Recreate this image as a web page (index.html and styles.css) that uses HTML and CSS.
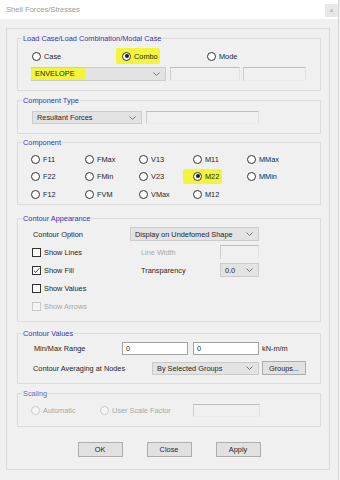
FILE: index.html
```html
<!DOCTYPE html>
<html lang="en">
<head>
  <meta charset="UTF-8">
  <title>Shell Forces/Stresses</title>
  <link rel="stylesheet" href="styles.css">
</head>
<body>

  <div class="window">
    <div class="titlebar">
      <span class="title">Shell Forces/Stresses</span>
      <span class="close">×</span>
    </div>

    <div class="panel">

      <!-- Load case -->
      <fieldset class="group">
        <legend>Load Case/Load Combination/Modal Case</legend>
        <div class="body load-body">
          <div class="case-row">
            <label class="opt"><span class="radio"></span>Case</label>
            <label class="opt"><span class="hl hl-combo"><span class="radio on"></span>Combo</span></label>
            <label class="opt"><span class="radio"></span>Mode</label>
          </div>
          <div class="field-row">
            <div class="combo combo-env">
              <span class="hl hl-env">ENVELOPE</span>
              <svg class="chev" width="7" height="4" viewBox="0 0 7 4"><polyline points="0.5,0.5 3.5,3.5 6.5,0.5" /></svg>
            </div>
            <div class="box box-a"></div>
            <div class="box box-b"></div>
          </div>
        </div>
      </fieldset>

      <!-- Component type -->
      <fieldset class="group g-type">
        <legend>Component Type</legend>
        <div class="body type-body">
          <div class="combo combo-type">
            <span>Resultant Forces</span>
            <svg class="chev" width="7" height="4" viewBox="0 0 7 4"><polyline points="0.5,0.5 3.5,3.5 6.5,0.5" /></svg>
          </div>
          <div class="box box-type"></div>
        </div>
      </fieldset>

      <!-- Component -->
      <fieldset class="group g-comp">
        <legend>Component</legend>
        <div class="body comp-body">
          <label class="opt"><span class="radio"></span>F11</label>
          <label class="opt"><span class="radio"></span>FMax</label>
          <label class="opt"><span class="radio"></span>V13</label>
          <label class="opt"><span class="radio"></span>M11</label>
          <label class="opt"><span class="radio"></span>MMax</label>
          <label class="opt"><span class="radio"></span>F22</label>
          <label class="opt"><span class="radio"></span>FMin</label>
          <label class="opt"><span class="radio"></span>V23</label>
          <label class="opt"><span class="hl hl-m22"><span class="radio on"></span>M22</span></label>
          <label class="opt"><span class="radio"></span>MMin</label>
          <label class="opt"><span class="radio"></span>F12</label>
          <label class="opt"><span class="radio"></span>FVM</label>
          <label class="opt"><span class="radio"></span>VMax</label>
          <label class="opt"><span class="radio"></span>M12</label>
        </div>
      </fieldset>

      <!-- Contour appearance -->
      <fieldset class="group g-appear">
        <legend>Contour Appearance</legend>
        <div class="body appear-body">
          <div class="row">
            <span class="lbl lbl-option">Contour Option</span>
            <div class="combo combo-option">
              <span>Display on Undefomed Shape</span>
              <svg class="chev" width="7" height="4" viewBox="0 0 7 4"><polyline points="0.5,0.5 3.5,3.5 6.5,0.5" /></svg>
            </div>
          </div>
          <div class="row">
            <label class="opt opt-check"><span class="check"></span>Show Lines</label>
            <span class="lbl lbl-side dis">Line Width</span>
            <div class="box box-small"></div>
          </div>
          <div class="row">
            <label class="opt opt-check">
              <span class="check">
                <svg width="7" height="7" viewBox="0 0 7 7"><polyline points="0.8,3.6 2.7,5.4 6.2,1.4" /></svg>
              </span>Show Fill
            </label>
            <span class="lbl lbl-side">Transparency</span>
            <div class="combo combo-small">
              <span>0.0</span>
              <svg class="chev" width="7" height="4" viewBox="0 0 7 4"><polyline points="0.5,0.5 3.5,3.5 6.5,0.5" /></svg>
            </div>
          </div>
          <div class="row">
            <label class="opt"><span class="check"></span>Show Values</label>
          </div>
          <div class="row">
            <label class="opt dis"><span class="check"></span>Show Arrows</label>
          </div>
        </div>
      </fieldset>

      <!-- Contour values -->
      <fieldset class="group g-values">
        <legend>Contour Values</legend>
        <div class="body values-body">
          <div class="row row-range">
            <span class="lbl lbl-range">Min/Max Range</span>
            <div class="input">0</div>
            <div class="input">0</div>
            <span class="unit">kN-m/m</span>
          </div>
          <div class="row row-avg">
            <span class="lbl lbl-avg">Contour Averaging at Nodes</span>
            <div class="combo combo-avg">
              <span>By Selected Groups</span>
              <svg class="chev" width="7" height="4" viewBox="0 0 7 4"><polyline points="0.5,0.5 3.5,3.5 6.5,0.5" /></svg>
            </div>
            <button class="btn btn-groups">Groups...</button>
          </div>
        </div>
      </fieldset>

      <!-- Scaling -->
      <fieldset class="group g-scale dis-group">
        <legend>Scaling</legend>
        <div class="body scale-body">
          <label class="opt dis opt-auto"><span class="radio"></span>Automatic</label>
          <label class="opt dis opt-user"><span class="radio"></span>User Scale Factor</label>
          <div class="box box-scale"></div>
        </div>
      </fieldset>

      <div class="actions">
        <button class="btn btn-main">OK</button>
        <button class="btn btn-main">Close</button>
        <button class="btn btn-main">Apply</button>
      </div>

    </div>
  </div>

</body>
</html>
```

FILE: styles.css
```css
* {
  box-sizing: border-box;
}

body {
  margin: 0;
  background: #f0f0f0;
  font-family: "Liberation Sans", Arial, sans-serif;
  font-size: 7.35px;
  line-height: 9px;
  color: #1e1e1e;
}

.window {
  width: 339px;
  height: 480px;
  border-right: 1px solid #d6d6d6;
  background: #f0f0f0;
}

.titlebar {
  height: 19px;
  background: #fff;
  display: flex;
  align-items: center;
  justify-content: space-between;
  padding: 0 0 0 6px;
}

.title {
  font-size: 7.6px;
  color: #9a9a9a;
}

.close {
  width: 13px;
  height: 13px;
  margin-top: 2px;
  background: #e8e8e8;
  color: #a6a6a6;
  font-size: 8px;
  line-height: 13px;
  text-align: center;
}

.panel {
  margin: 9px 0 0 6px;
  width: 324px;
  border: 1px solid #dcdcdc;
  padding: 5px 8px 12px 10px;
}

/* group boxes */
.group {
  margin: 0;
  padding: 0;
  min-width: 0;
  border: 1px solid #dcdcdc;
}

.group legend {
  margin-left: 4px;
  padding: 0 1px;
  line-height: 9px;
  color: #3535a8;
}

.dis-group legend {
  color: #6a6aba;
}

.g-type { margin-top: 5px; }
.g-comp { margin-top: 4px; }
.g-appear { margin-top: 9px; }
.g-values { margin-top: 7px; }
.g-scale { margin-top: 5px; }

/* options */
.opt {
  display: flex;
  align-items: center;
  gap: 3px;
  height: 12px;
  white-space: nowrap;
}

.radio {
  width: 9px;
  height: 9px;
  border: 1px solid #333;
  border-radius: 50%;
  background: #fff;
  display: inline-flex;
  align-items: center;
  justify-content: center;
  flex: none;
}

.radio.on::after {
  content: "";
  width: 4px;
  height: 4px;
  border-radius: 50%;
  background: #1e1e1e;
}

.check {
  width: 9px;
  height: 9px;
  border: 1px solid #333;
  background: #fff;
  display: inline-flex;
  align-items: center;
  justify-content: center;
  flex: none;
}

.check polyline {
  fill: none;
  stroke: #222;
  stroke-width: 0.9;
}

.dis {
  color: #a8a8a8;
}

.dis .radio,
.dis .check {
  border-color: #cacaca;
  background: #f5f5f5;
}

/* marker highlight */
.hl {
  background: #f4f53a;
  border-radius: 2px;
}

.hl-combo,
.hl-m22 {
  display: flex;
  align-items: center;
  gap: 3px;
  height: 16px;
  margin: -2px 0 -2px -6px;
  padding: 0 2px 0 6px;
}

.hl-m22 {
  height: 15px;
  margin: -2px 0 -1px -10px;
  padding: 0 3px 0 10px;
}

.hl-env {
  height: 12px;
  line-height: 12px;
  padding: 0 11px 0 4px;
  margin-left: -1px;
}

/* fields */
.combo {
  display: flex;
  align-items: center;
  justify-content: space-between;
  background: #e3e3e3;
  border: 1px solid #cbcbcb;
  padding: 0 5px 0 4px;
  flex: none;
  white-space: nowrap;
}

.chev polyline {
  fill: none;
  stroke: #6a6a6a;
  stroke-width: 0.9;
}

.box {
  background: #f0f0f0;
  border: 1px solid;
  border-color: #bdbdbd #e2e2e2 #ececec #cfcfcf;
  flex: none;
}

.input {
  height: 13px;
  background: #fff;
  border: 1px solid #a3a3a3;
  padding: 0 3px;
  line-height: 11px;
  flex: none;
}

.btn {
  font: inherit;
  color: #1e1e1e;
  background: #e1e1e1;
  border: 1px solid #adadad;
  padding: 0;
  flex: none;
}

/* load case */
.load-body {
  padding: 7px 0 9px 13px;
}

.case-row {
  display: grid;
  grid-template-columns: 90px 85px auto;
  padding-left: 1px;
  margin-bottom: 5px;
}

.field-row {
  display: flex;
  height: 14px;
}

.combo-env {
  width: 135px;
  padding-left: 0;
}

.box-a {
  width: 70px;
  margin-left: 4px;
}

.box-b {
  width: 63px;
  margin-left: 3px;
}

/* component type */
.type-body {
  display: flex;
  padding: 6px 0 9px 14px;
}

.combo-type {
  width: 110px;
  height: 13px;
}

.box-type {
  width: 113px;
  height: 13px;
  margin-left: 4px;
}

/* component */
.comp-body {
  display: grid;
  grid-template-columns: repeat(5, 54px);
  row-gap: 5.5px;
  padding: 6px 0 4px 13px;
}

/* contour appearance */
.appear-body {
  display: flex;
  flex-direction: column;
  gap: 4px;
  padding: 4px 0 8px 14px;
}

.row {
  display: flex;
  align-items: center;
  height: 14px;
}

.lbl {
  white-space: nowrap;
  flex: none;
}

.lbl-option {
  width: 98px;
  padding-left: 1px;
}

.combo-option {
  width: 129px;
  height: 14px;
}

.opt-check {
  width: 109px;
}

.lbl-side {
  width: 79px;
}

.box-small {
  width: 39px;
  height: 14px;
}

.combo-small {
  width: 39px;
  height: 14px;
}

/* contour values */
.values-body {
  padding: 4px 0 8px 14px;
}

.row-range {
  height: 13px;
  margin-bottom: 6px;
}

.row-range .input {
  width: 66px;
}

.row-range .input + .input {
  margin-left: 5px;
}

.lbl-range {
  width: 90px;
  padding-left: 2px;
}

.unit {
  margin-left: 3px;
}

.lbl-avg {
  width: 120px;
  padding-left: 1px;
}

.combo-avg {
  width: 107px;
  height: 13px;
}

.btn-groups {
  width: 44px;
  height: 14px;
  margin-left: 3px;
}

/* scaling */
.scale-body {
  display: flex;
  align-items: center;
  height: 13px;
  box-sizing: content-box;
  padding: 6px 0 9px 13px;
}

.opt-auto {
  width: 69px;
}

.opt-user {
  width: 93px;
}

.box-scale {
  width: 67px;
  height: 13px;
}

/* dialog buttons */
.actions {
  display: flex;
  justify-content: center;
  gap: 24px;
  margin-top: 15px;
}

.btn-main {
  width: 45px;
  height: 15px;
}
```
